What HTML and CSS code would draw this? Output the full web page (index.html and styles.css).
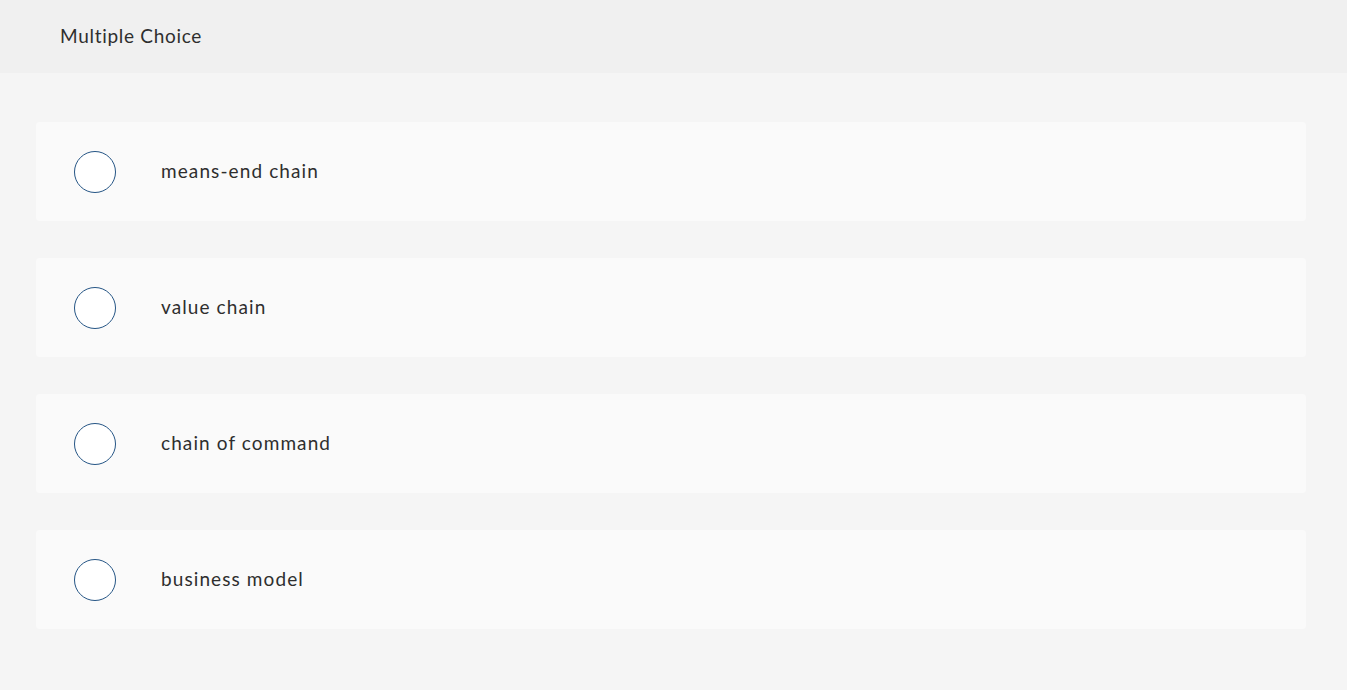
FILE: index.html
```html
<!DOCTYPE html>
<html>
<head>
<meta charset="utf-8">
<link rel="stylesheet" href="styles.css">
</head>
<body>
<div class="page">
  <header class="header">Multiple Choice</header>
  <main class="choices">
    <div class="choice"><span class="radio"></span><span class="label">means-end chain</span></div>
    <div class="choice"><span class="radio"></span><span class="label">value chain</span></div>
    <div class="choice"><span class="radio"></span><span class="label">chain of command</span></div>
    <div class="choice"><span class="radio"></span><span class="label">business model</span></div>
  </main>
</div>
</body>
</html>
```
FILE: styles.css
```css
html, body {
  margin: 0;
  padding: 0;
  background: #ffffff;
}
.page {
  font-family: Lato, "Open Sans", sans-serif;
  color: #2e2e2e;
}
.header {
  height: 73px;
  background: #f0f0f0;
  display: flex;
  align-items: center;
  padding-left: 60px;
  padding-bottom: 2px;
  font-size: 19px;
  letter-spacing: 0.7px;
  box-sizing: border-box;
}
.choices {
  background: #f5f5f5;
  padding: 49px 41px 61px 36px;
  display: flex;
  flex-direction: column;
  gap: 37px;
}
.choice {
  height: 99px;
  background: #fafafa;
  border-radius: 4px;
  display: flex;
  align-items: center;
  padding-left: 38px;
  box-sizing: border-box;
}
.radio {
  width: 42px;
  height: 42px;
  box-sizing: border-box;
  border: 1px solid #255585;
  border-radius: 50%;
  background: #ffffff;
  flex: none;
}
.label {
  margin-left: 45px;
  margin-bottom: 2px;
  font-size: 19px;
  letter-spacing: 1.1px;
}
```
